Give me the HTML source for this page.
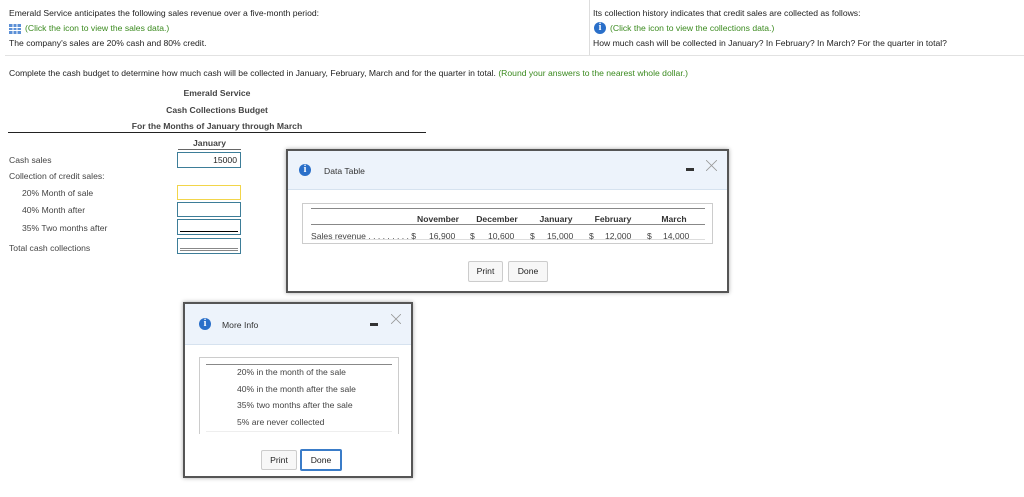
<!DOCTYPE html>
<html><head><style>
body{margin:0;width:1024px;height:497px;background:#fff;font-family:"Liberation Sans",Arial,sans-serif;font-size:8.6px;color:#222;position:relative;overflow:hidden}
.a{position:absolute;white-space:nowrap}
.g{color:#3a8a1e}
.b{font-weight:bold;color:#444}
.box{position:absolute;border:1px solid #3d7d98;background:#fff;box-sizing:border-box}
.ic{position:absolute;width:12px;height:12px;border-radius:50%;background:#2a6fc9;color:#fff;font:bold 10px/12px "Liberation Serif",serif;text-align:center}
.dlg{position:absolute;border:2px solid #555;background:#fff;box-shadow:0 0 4px #aaa;box-sizing:border-box}
.hd{position:absolute;left:0;right:0;top:0;background:#edf3fb;border-bottom:1px solid #d6e2ef}
.btn{position:absolute;border:1px solid #ccc;background:#f7f7f7;border-radius:2px;text-align:center;box-sizing:border-box;font-size:8.6px}
.c{position:absolute;text-align:center;width:60px;white-space:nowrap}
</style></head><body>
<div class="a" style="left:9px;top:8px">Emerald Service anticipates the following sales revenue over a five-month period:</div>
<svg class="a" style="left:9px;top:24px" width="12" height="10"><rect x="0" y="0" width="12" height="10" fill="#5b8fd6"/><g stroke="#fff" stroke-width="1"><line x1="0" y1="3.5" x2="12" y2="3.5"/><line x1="0" y1="6.5" x2="12" y2="6.5"/><line x1="4" y1="0" x2="4" y2="10"/><line x1="8" y1="0" x2="8" y2="10"/></g></svg>
<div class="a g" style="left:25px;top:23px">(Click the icon to view the sales data.)</div>
<div class="a" style="left:9px;top:38px">The company's sales are 20% cash and 80% credit.</div>
<div class="a" style="left:589px;top:0;width:1px;height:55px;background:#ddd"></div>
<div class="a" style="left:5px;top:55px;width:1019px;height:1px;background:#e2e2e2"></div>
<div class="a" style="left:593px;top:8px">Its collection history indicates that credit sales are collected as follows:</div>
<div class="ic" style="left:594px;top:22px">i</div>
<div class="a g" style="left:610px;top:23px">(Click the icon to view the collections data.)</div>
<div class="a" style="left:593px;top:38px">How much cash will be collected in January? In February? In March? For the quarter in total?</div>
<div class="a" style="left:9px;top:68px">Complete the cash budget to determine how much cash will be collected in January, February, March and for the quarter in total. <span class="g">(Round your answers to the nearest whole dollar.)</span></div>
<div class="a b" style="left:0;width:434px;text-align:center;top:88px">Emerald Service</div>
<div class="a b" style="left:0;width:434px;text-align:center;top:105px">Cash Collections Budget</div>
<div class="a b" style="left:0;width:434px;text-align:center;top:121px">For the Months of January through March</div>
<div class="a" style="left:8px;top:132px;width:418px;height:1px;background:#222"></div>
<div class="a b" style="left:178px;width:63px;text-align:center;top:138px">January</div>
<div class="a" style="left:178px;top:149px;width:63px;height:1px;background:#666"></div>
<div class="a" style="left:9px;top:155px;color:#444">Cash sales</div>
<div class="box" style="left:177px;top:152px;width:64px;height:16px;text-align:right;padding-right:3px;line-height:14px">15000</div>
<div class="a" style="left:9px;top:171px;color:#444">Collection of credit sales:</div>
<div class="a" style="left:22px;top:188px;color:#444">20% Month of sale</div>
<div class="box" style="left:177px;top:185px;width:64px;height:15px;border-color:#f2d54a"></div>
<div class="a" style="left:22px;top:205px;color:#444">40% Month after</div>
<div class="box" style="left:177px;top:202px;width:64px;height:15px"></div>
<div class="a" style="left:22px;top:223px;color:#444">35% Two months after</div>
<div class="box" style="left:177px;top:219px;width:64px;height:16px"><div style="position:absolute;left:2px;right:2px;top:11px;height:1px;background:#000"></div></div>
<div class="a" style="left:9px;top:243px;color:#444">Total cash collections</div>
<div class="box" style="left:177px;top:238px;width:64px;height:16px"><div style="position:absolute;left:2px;right:2px;top:9px;height:3px;border-top:1px solid #888;border-bottom:1px solid #888;box-sizing:border-box"></div></div>

<div class="dlg" style="left:286px;top:149px;width:443px;height:144px">
<div class="hd" style="height:38px"></div>
<div class="ic" style="left:11px;top:13px">i</div>
<div class="a" style="left:36px;top:15px;color:#333">Data Table</div>
<div class="a" style="left:398px;top:17px;width:8px;height:3px;background:#333"></div>
<svg class="a" style="left:418px;top:9px" width="11" height="11"><path d="M0 0L11 11M11 0L0 11" stroke="#999" stroke-width="0.8"/></svg>
<div class="a" style="left:14px;top:52px;width:411px;height:41px;border:1px solid #ccc;box-sizing:border-box"></div>
<div class="a" style="left:23px;top:57px;width:394px;height:1px;background:#888"></div>
<div class="a" style="left:23px;top:88px;width:394px;height:1px;background:#ddd"></div>
<div class="a" style="left:23px;top:73px;width:394px;height:1px;background:#888"></div>
<div class="c b" style="left:120px;top:63px;color:#333">November</div>
<div class="c b" style="left:179px;top:63px;color:#333">December</div>
<div class="c b" style="left:238px;top:63px;color:#333">January</div>
<div class="c b" style="left:295px;top:63px;color:#333">February</div>
<div class="c b" style="left:356px;top:63px;color:#333">March</div>
<div class="a" style="left:23px;top:80px;color:#444">Sales revenue . . . . . . . . . $</div>
<div class="a" style="left:141px;top:80px;color:#444">16,900</div>
<div class="a" style="left:182px;top:80px;color:#444">$</div>
<div class="a" style="left:200px;top:80px;color:#444">10,600</div>
<div class="a" style="left:242px;top:80px;color:#444">$</div>
<div class="a" style="left:259px;top:80px;color:#444">15,000</div>
<div class="a" style="left:301px;top:80px;color:#444">$</div>
<div class="a" style="left:317px;top:80px;color:#444">12,000</div>
<div class="a" style="left:359px;top:80px;color:#444">$</div>
<div class="a" style="left:375px;top:80px;color:#444">14,000</div>
<div class="btn" style="left:180px;top:110px;width:35px;height:21px;line-height:19px">Print</div>
<div class="btn" style="left:220px;top:110px;width:40px;height:21px;line-height:19px">Done</div>
</div>

<div class="dlg" style="left:183px;top:302px;width:230px;height:176px">
<div class="hd" style="height:40px"></div>
<div class="ic" style="left:14px;top:14px">i</div>
<div class="a" style="left:37px;top:16px;color:#333">More Info</div>
<div class="a" style="left:185px;top:19px;width:8px;height:3px;background:#333"></div>
<svg class="a" style="left:206px;top:10px" width="10" height="10"><path d="M0 0L10 10M10 0L0 10" stroke="#999" stroke-width="0.8"/></svg>
<div class="a" style="left:14px;top:53px;width:200px;height:77px;border:1px solid #ccc;border-bottom:none;box-sizing:border-box"></div>
<div class="a" style="left:21px;top:60px;width:186px;height:1px;background:#888"></div>
<div class="a" style="left:21px;top:127px;width:186px;height:1px;background:#eee"></div>
<div class="a" style="left:52px;top:63px;color:#444">20% in the month of the sale</div>
<div class="a" style="left:52px;top:80px;color:#444">40% in the month after the sale</div>
<div class="a" style="left:52px;top:96px;color:#444">35% two months after the sale</div>
<div class="a" style="left:52px;top:113px;color:#444">5% are never collected</div>
<div class="btn" style="left:76px;top:146px;width:36px;height:20px;line-height:18px">Print</div>
<div class="btn" style="left:115px;top:145px;width:42px;height:22px;line-height:18px;border:2px solid #3a7cc8;background:#fff">Done</div>
</div>
</body></html>
